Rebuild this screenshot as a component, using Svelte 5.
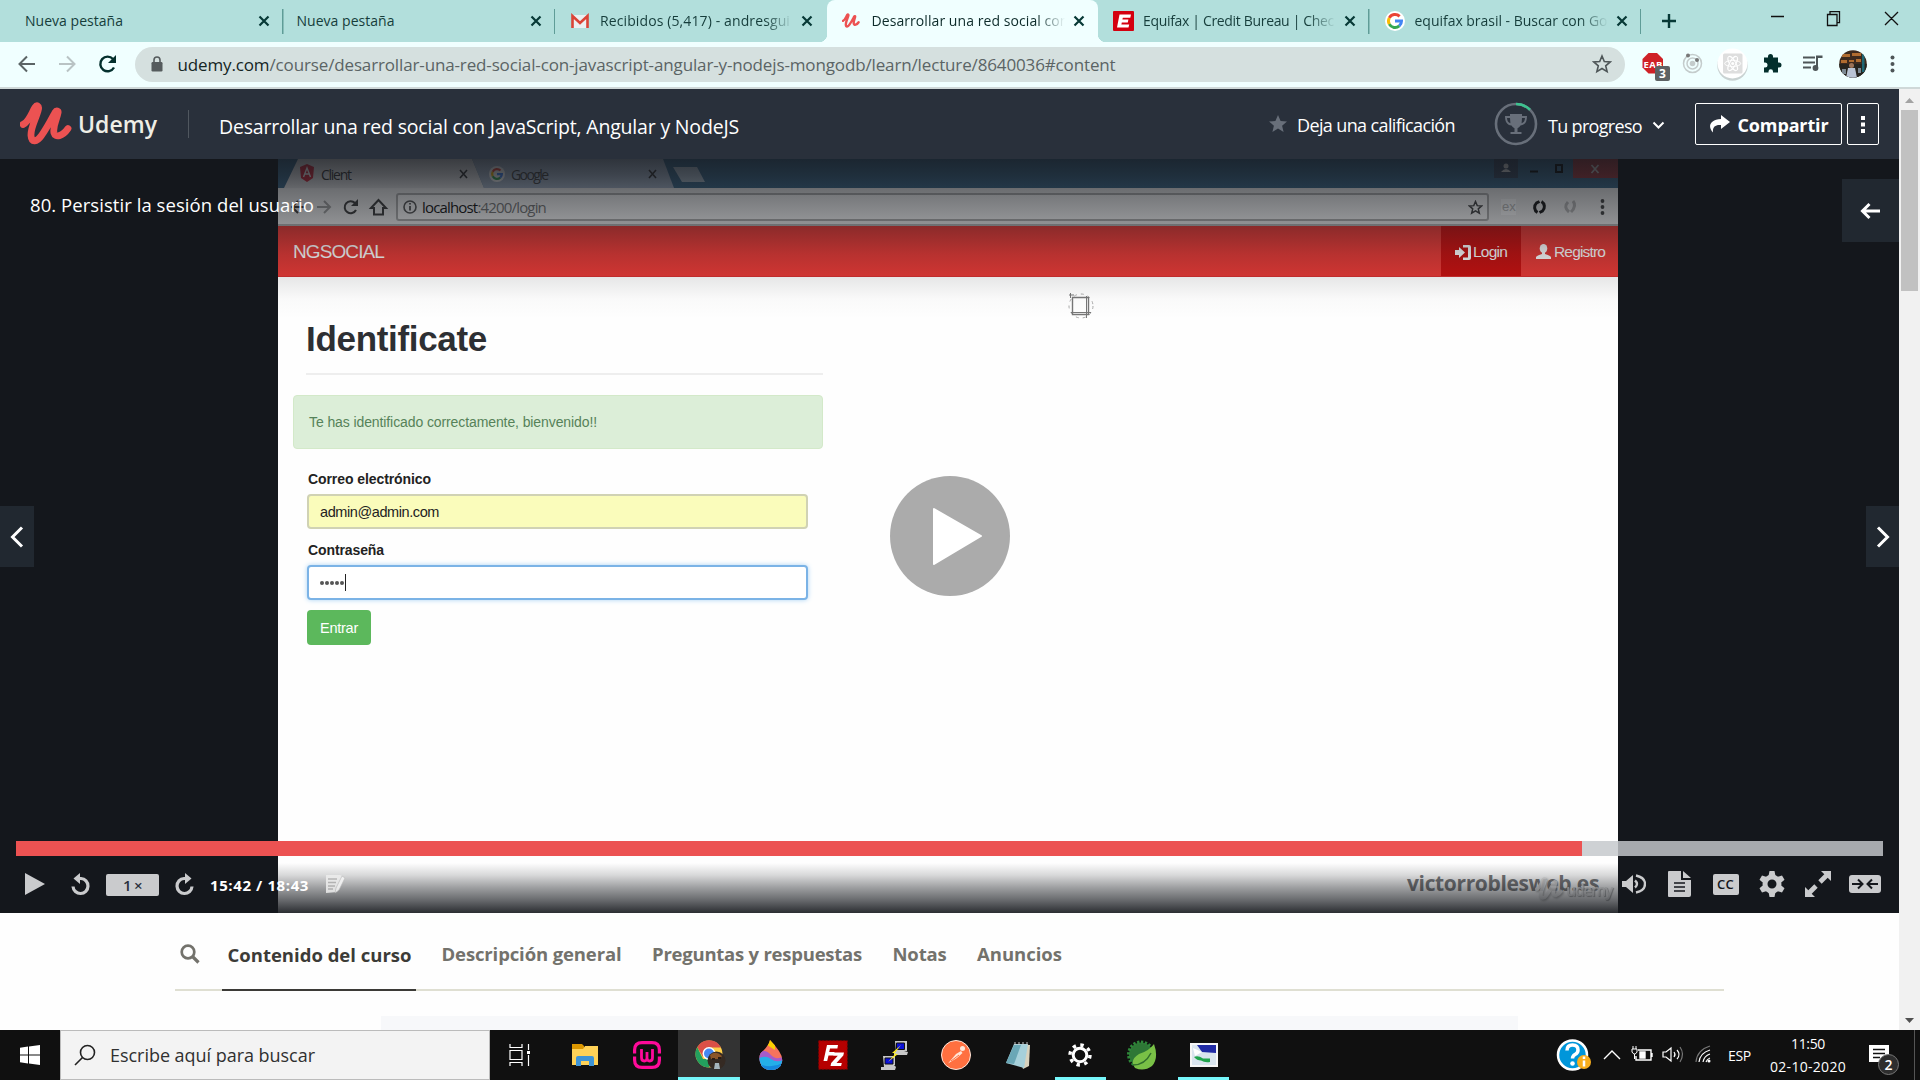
<script>
  const browserTabs = [
    { title: 'Nueva pestaña', width: 98 },
    { title: 'Nueva pestaña', width: 98 },
    { title: 'Recibidos (5,417) - andresgui', width: 190, icon: 'gmail' },
    { title: 'Desarrollar una red social con', width: 197, icon: 'udemy', active: true },
    { title: 'Equifax | Credit Bureau | Chec', width: 191, icon: 'equifax' },
    { title: 'equifax brasil - Buscar con Go', width: 193, icon: 'google' }
  ];

  const sections = [
    { title: 'Contenido del curso', width: 184, active: true },
    { title: 'Descripción general', width: 180 },
    { title: 'Preguntas y respuestas', width: 210 },
    { title: 'Notas', width: 54 },
    { title: 'Anuncios', width: 85 }
  ];

  const progress = 83.88;

  // Spreads a label's letters so that it takes the given width.
  function fit(node, width) {
    const natural = node.getBoundingClientRect().width;
    node.style.letterSpacing = (width - natural) / node.textContent.length + 'px';
    node.style.width = width + 'px';
  }
</script>

{#snippet udemyMark(color)}
  <path d="M3 22.500C9 20 12 10 15 5.500c2-3 4-1.500 3.500 1.500C17 15 10.500 25 11 33.500c.5 7.500 6 6.500 10.500 0C27 26 31 18 35 10.500c1.500-2.500 3.500-1.500 3 .5C37 17 32.500 24 34 31c1.200 5 8.500 3.500 14-4.500" fill="none" stroke={color} stroke-width="6.800" stroke-linecap="round" stroke-linejoin="round" />
{/snippet}

{#snippet googleMark()}
  <g fill="none" stroke-width="3">
    <path d="M14.6 5.4A6.5 6.5 0 0 0 4.3 6.9" stroke="#ea4335" />
    <path d="M4.3 6.9a6.5 6.5 0 0 0 0 6.2" stroke="#fbbc05" />
    <path d="M4.3 13.1a6.5 6.5 0 0 0 10 1.8" stroke="#34a853" />
    <path d="M14.3 14.9a6.5 6.5 0 0 0 2.2-4.9H10" stroke="#4285f4" />
  </g>
{/snippet}

{#snippet cross()}
  <svg class="cross" width="12" height="12" viewBox="0 0 12 12"><path d="M1.5 1.5l9 9m0-9l-9 9" /></svg>
{/snippet}

<div class="screen">
  <div class="tabstrip">
    {#each browserTabs as tab}
      <div class="tab" class:active={tab.active}>
        {#if tab.icon}
          <span class="favicon">
            {#if tab.icon === 'gmail'}
              <svg width="20" height="20" viewBox="0 0 20 20"><path d="M2 4h16v13H2z" fill="#eceff1" /><path d="M2.500 17V5l7.500 7 7.500-7v12" fill="none" stroke="#db4437" stroke-width="2.600" /></svg>
            {:else if tab.icon === 'udemy'}
              <svg width="18" height="18" viewBox="0 0 52 46">{@render udemyMark('#ec5252')}</svg>
            {:else if tab.icon === 'equifax'}
              <svg width="21" height="20" viewBox="0 0 21 20"><rect width="21" height="20" rx="1" fill="#d4000f" /><path d="M6.5 3.5H18l-.7 3.2H9.8l-.4 1.8h6l-.6 3h-6l-.4 2h7.8l-.7 3H4z" fill="#fff" /></svg>
            {:else}
              <svg width="20" height="20" viewBox="0 0 20 20"><circle cx="10" cy="10" r="10" fill="#fff" />{@render googleMark()}</svg>
            {/if}
          </span>
        {/if}
        <span class="title" class:faded={tab.icon}><span class="fit" use:fit={tab.width}>{tab.title}</span></span>
        {@render cross()}
      </div>
    {/each}
    <svg class="newtab" width="16" height="16" viewBox="0 0 16 16"><path d="M8 1v14M1 8h14" fill="none" stroke="#073936" stroke-width="2.4" /></svg>
    <svg class="winbtns" width="130" height="20" viewBox="0 0 130 20" fill="none" stroke="#111" stroke-width="1.3"><path d="M1 8.500h13M57.500 6.500h9.500v11h-9.500zM60 6v-2.300h9.500v11H67M115 4l13 13m0-13l-13 13" /></svg>
  </div>

  <div class="toolbar">
    <svg class="nav" width="100" height="24" viewBox="0 0 100 24" fill="none" stroke-width="2">
      <path d="M17 12H2M9 4.500L1.500 12 9 19.500" stroke="#5b6465" />
      <path d="M41 12h15M49 4.500l7.500 7.500-7.500 7.500" stroke="#b9c3c4" />
      <path d="M96 15.500A7.300 7.300 0 1 1 95 7" stroke="#04302d" stroke-width="2.400" /><path d="M98 3v8h-8z" fill="#04302d" />
    </svg>
    <div class="omnibox">
      <svg width="12" height="16" viewBox="0 0 12 16"><rect x=".5" y="6" width="11" height="9.500" rx="1.200" fill="#555b5d" /><path d="M3 7V4a3 3 0 0 1 6 0v3" fill="none" stroke="#555b5d" stroke-width="1.600" /></svg>
      <span class="fit url" use:fit={938}><b>udemy.com</b>/course/desarrollar-una-red-social-con-javascript-angular-y-nodejs-mongodb/learn/lecture/8640036#content</span>
      <svg class="star" width="20" height="20" viewBox="0 0 20 20"><path d="M10 2l2.300 5.500 5.900.4-4.500 3.900 1.400 5.800L10 14.500l-5.100 3.100 1.400-5.800L1.800 7.900l5.900-.4z" fill="none" stroke="#4e5658" stroke-width="1.600" /></svg>
    </div>
    <svg class="ext" width="260" height="36" viewBox="1640 47 260 36">
      <path d="M1648.500 54h8.500l6 6v8.500l-6 6h-8.500l-6-6V60z" fill="#cf2127" />
      <text x="1643.500" y="68.500" fill="#fff" font-size="9.500" font-weight="700" textLength="19">EAB</text>
      <rect x="1655" y="67" width="15" height="15" rx="2" fill="#5d6264" /><text x="1659" y="79" fill="#fff" font-size="12" font-weight="700">3</text>
      <g fill="none" stroke="#c4cccc" stroke-width="1.500"><circle cx="1692.500" cy="64.500" r="9" /><circle cx="1692.500" cy="64.500" r="5.500" /></g><circle cx="1692.500" cy="64.500" r="2.800" fill="#c4cccc" /><circle cx="1688" cy="56.500" r="2" fill="#777" /><circle cx="1697" cy="61" r="2" fill="#777" />
      <circle cx="1732.500" cy="66.500" r="15.200" fill="#c9d2d2" /><circle cx="1732.500" cy="64.500" r="15" fill="#fff" /><rect x="1723" y="54.500" width="19.500" height="20" rx="1.500" fill="#dedede" />
      <g fill="none" stroke="#fff"><ellipse cx="1732.700" cy="64.500" rx="8" ry="3" /><ellipse cx="1732.700" cy="64.500" rx="8" ry="3" transform="rotate(60 1732.700 64.500)" /><ellipse cx="1732.700" cy="64.500" rx="8" ry="3" transform="rotate(120 1732.700 64.500)" /></g><circle cx="1732.700" cy="64.500" r="1.500" fill="#fff" />
      <path d="M1764 58.500h4v-1a2.500 2.500 0 0 1 5 0v1h5v5h1a2.500 2.500 0 0 1 0 5h-1v5h-5v-1a2 2 0 0 0-4.500 0v1h-4.500v-5h1a2.400 2.400 0 0 0 0-5h-1z" fill="#032f2c" />
      <path d="M1803 58.500h12M1803 63.500h12M1803 68.500h8" stroke="#4e5658" stroke-width="2" /><path d="M1817 58v11" stroke="#4e5658" stroke-width="2" /><path d="M1816 56.500h6.500v2.500h-6.500z" fill="#4e5658" /><circle cx="1815.500" cy="69" r="2.900" fill="#4e5658" />
      <g clip-path="url(#avatar)"><rect x="1839" y="50" width="29" height="29" fill="#3d2a1e" /><path d="M1842 55h8v3h-8zM1852 54h9v3h-9zM1841 61h6v3h-6zM1849 61h5v2h-5zM1856 60h5v3h-5z" fill="#b06c30" /><path d="M1839 65h29v14h-29z" fill="#26241f" /><path d="M1848 69h7l2 10h-11z" fill="#b9c3d4" /><circle cx="1851.500" cy="66.500" r="2.500" fill="#9b7257" /><path d="M1842 70h4v5h-4zM1858 69h3v5h-3z" fill="#7b8791" /><path d="M1862 53h2.500v20h-2.500z" fill="#1e6673" /></g>
      <clipPath id="avatar"><circle cx="1853" cy="65" r="13.800" /></clipPath>
      <g fill="#4e5658"><circle cx="1892.500" cy="58.500" r="2" /><circle cx="1892.500" cy="65" r="2" /><circle cx="1892.500" cy="71.500" r="2" /></g>
    </svg>
  </div>

  <div class="page">
    <main>
      <header>
        <svg class="logo" width="52" height="44" viewBox="0 0 52 44" preserveAspectRatio="none">{@render udemyMark('#ec5252')}</svg>
        <span class="fit brand" use:fit={79}>Udemy</span>
        <i class="rule"></i>
        <h1 class="fit" use:fit={520}>Desarrollar una red social con JavaScript, Angular y NodeJS</h1>
        <svg class="rate-star" width="18" height="18" viewBox="0 0 18 18"><path d="M9 0l2.600 6 6.400.5-4.900 4.200 1.500 6.300L9 13.600 3.400 17l1.500-6.300L0 6.500 6.400 6z" fill="#686f7a" /></svg>
        <span class="fit rate" use:fit={158}>Deja una calificación</span>
        <svg class="trophy" width="44" height="46" viewBox="0 0 44 46"><circle cx="22" cy="23" r="20" fill="none" stroke="#686f7a" stroke-width="2.600" /><path d="M22 3a20 20 0 0 1 14 5.700" fill="none" stroke="#3dc28f" stroke-width="2.600" /><path d="M16 13h12v2h5c0 6-2 9-6.500 9.500-1 1.500-2 2.300-3 2.700V31h4v2h-11v-2h4v-3.800c-1-.4-2-1.200-3-2.700C13 24 11 21 11 15h5zm-3 4c.2 2.800 1.200 4.500 3.400 5.300L16 17zm15 0l-.4 5.300c2.200-.8 3.200-2.500 3.400-5.300z" fill="#686f7a" /></svg>
        <span class="fit prog" use:fit={94}>Tu progreso</span>
        <svg class="chev" width="13" height="9" viewBox="0 0 13 9"><path d="M1.500 1.500l5 5 5-5" fill="none" stroke="#fff" stroke-width="2" /></svg>
        <button class="share">
          <svg width="21" height="18" viewBox="0 0 21 18"><path d="M12 0l9 7-9 7v-4C6 9.500 3.500 12 4 17.500-1.500 12 .500 4.500 12 4z" fill="#fff" /></svg>
          <span class="fit" use:fit={91}>Compartir</span>
        </button>
        <button class="more"><svg width="4" height="17" viewBox="0 0 4 17" fill="#fff"><path d="M0 0h4v4H0zM0 6.500h4v4H0zM0 13h4v4H0z" /></svg></button>
      </header>

      <div class="player">
        <div class="video">
          <svg class="vtabs" width="1340" height="29" viewBox="278 159 1340 29">
            <path d="M278 159h1340v29H278z" fill="#3c6b8e" />
            <path d="M472 159h191l11 29H484z" fill="#a9b8cc" /><path d="M673 167h24l8 15h-23z" fill="#b1c2d2" />
            <path d="M278 188h6l14-29h174l12 29z" fill="#e4e4e6" />
            <path d="M300 167l7-3 7 3-1 11-6 4-6-4z" fill="#d9263a" /><path d="M303.500 177l3.500-9 3.500 9m-6-3h5" fill="none" stroke="#fff" stroke-width="1.400" />
            <text x="321" y="180" font-size="14" textLength="31" fill="#333">Client</text><text x="511" y="180" font-size="14" textLength="38" fill="#444">Google</text>
            <circle cx="497" cy="174" r="8" fill="#f7f7f7" /><g transform="translate(489.500 166.500) scale(.75)">{@render googleMark()}</g>
            <path d="M460 170l7 8m0-8l-7 8M649 170l7 8m0-8l-7 8" stroke="#333" stroke-width="1.600" />
            <path d="M1494 159h24v19h-24z" fill="#3b4b63" /><circle cx="1506" cy="166" r="2.500" fill="#ddd" /><path d="M1501 172q5-6 10 0z" fill="#ddd" />
            <path d="M1530 171.500h8M1556 165h6v7h-6z" fill="none" stroke="#0a0a0a" stroke-width="2" /><path d="M1573 159h45v19h-45z" fill="#a8393f" /><path d="M1591.500 165l7 8m0-8l-7 8" stroke="#ccc" stroke-width="1.700" />
          </svg>
          <div class="vbar">
            <svg width="110" height="26" viewBox="280 194 110 26" fill="none" stroke="#3c3c3c" stroke-width="2">
              <path d="M304 207h-13m6-6l-6 6 6 6" /><path d="M316 207h13m-6-6l6 6-6 6" stroke="#a0a0a0" /><path d="M355 210a6 6 0 1 1-1-7" /><path d="M357 199v7h-7z" fill="#3c3c3c" stroke="none" /><path d="M370 208l7.500-8 7.500 8h-3v6.500h-9V208z" />
            </svg>
            <div class="vurl">
              <svg width="14" height="14" viewBox="0 0 14 14"><circle cx="7" cy="7" r="6" fill="none" stroke="#555" stroke-width="1.600" /><path d="M7 6v4.500M7 3v1.600" stroke="#555" stroke-width="1.800" /></svg>
              <span class="fit" use:fit={124}><b>localhost</b>:4200/login</span>
              <svg class="vstar" width="15" height="15" viewBox="0 0 20 20"><path d="M10 2l2.300 5.500 5.900.4-4.500 3.900 1.400 5.800L10 14.500l-5.100 3.100 1.400-5.800L1.800 7.900l5.900-.4z" fill="none" stroke="#444" stroke-width="2" /></svg>
            </div>
            <svg width="115" height="24" viewBox="1498 195 115 24"><path d="M1501 199h15v16h-15z" fill="#fff" /><text x="1502" y="211" font-size="13" fill="#bbb">ex</text><g fill="none" stroke-width="3"><path d="M1537.500 212.500a6 6 0 0 1-1-9.500l3-1.500M1541.500 201.500a6 6 0 0 1 1 9.500l-3 1.500" stroke="#171717" /><path d="M1569 212q-6-5-1-10M1573 201q4 5-2 11" stroke="#b8b8b8" /></g><g fill="#444"><circle cx="1602.500" cy="201" r="1.900" /><circle cx="1602.500" cy="207" r="1.900" /><circle cx="1602.500" cy="213" r="1.900" /></g></svg>
          </div>
          <div class="vnav">
            <span class="fit vbrand" use:fit={91}>NGSOCIAL</span>
            <span class="vlogin">
              <svg width="16" height="15" viewBox="0 0 16 15" fill="#fff"><path d="M0 5h4V2l6 5.500L4 13v-3H0z" /><path d="M8 0h6q2 0 2 2v11q0 2-2 2H8v-2.500h5v-10H8z" /></svg>
              <span class="fit" use:fit={34}>Login</span>
            </span>
            <span class="vreg">
              <svg width="15" height="16" viewBox="0 0 15 16" fill="#fff"><ellipse cx="7.500" cy="4.500" rx="3.800" ry="4.500" /><path d="M6 7h3v3q5 1.500 6 3v2H0v-2q1-1.500 6-3z" /></svg>
              <span class="fit" use:fit={51}>Registro</span>
            </span>
          </div>
          <div class="vform">
            <h2><span class="fit" use:fit={181}>Identificate</span></h2>
            <div class="alert"><span class="fit" use:fit={288}>Te has identificado correctamente, bienvenido!!</span></div>
            <label><span class="fit" use:fit={123}>Correo electrónico</span></label>
            <div class="field mail"><span class="fit" use:fit={119}>admin@admin.com</span></div>
            <label><span class="fit" use:fit={76}>Contraseña</span></label>
            <div class="field pass"><i></i><i></i><i></i><i></i><i></i><b></b></div>
            <div class="enter"><span class="fit" use:fit={38}>Entrar</span></div>
          </div>
          <span class="credit"><span class="fit" use:fit={192}>victorroblesweb.es</span></span>
          <span class="watermark"><svg width="28" height="25" viewBox="0 0 52 46">{@render udemyMark('#e6e6e6')}</svg><span class="fit" use:fit={46}>udemy</span></span>
          <svg class="cursor" width="28" height="28" viewBox="0 0 28 28" fill="none" stroke="#777"><circle cx="14" cy="14" r="12" stroke-dasharray="3 4" stroke="#aaa" /><path d="M5.500 5.500h16v17h-16z" stroke-width="1.400" /><path d="M19.500 4v22M4 20.500h20M2 3h5M3.500 1v5" /></svg>
        </div>

        <div class="shade top"></div>
        <div class="shade bottom"></div>
        <span class="lecture"><span class="fit" use:fit={284}>80. Persistir la sesión del usuario</span></span>
        <button class="side back"><svg width="21" height="18" viewBox="0 0 21 18"><path d="M20 9H3M9.500 2L2.500 9l7 7" /></svg></button>
        <button class="side prev"><svg width="14" height="22" viewBox="0 0 14 22"><path d="M12 1.500L2.500 11l9.500 9.500" /></svg></button>
        <button class="side next"><svg width="14" height="22" viewBox="0 0 14 22"><path d="M2 1.500l9.500 9.500L2 20.500" /></svg></button>
        <svg class="bigplay" width="120" height="120" viewBox="0 0 120 120"><circle cx="60" cy="60" r="60" fill="#ababab" /><path d="M44 33l47 27-47 28z" fill="#fff" stroke="#fff" stroke-width="2" stroke-linejoin="round" /></svg>

        <div class="controls">
          <div class="track"><div class="played" style="width: {progress}%"></div></div>
          <div class="buttons">
            <svg class="c-play" width="20" height="22" viewBox="0 0 20 22"><path d="M0 0l20 11L0 22z" /></svg>
            <svg class="c-rew" width="20" height="23" viewBox="0 0 20 23"><path d="M8 5.500h2a7.500 7.500 0 1 1-8 8" fill="none" stroke="#cacbcd" stroke-width="3.200" /><path d="M9 0v11L2.500 5.500z" /></svg>
            <span class="speed"><span class="fit" use:fit={19}>1 ×</span></span>
            <svg class="c-fwd" width="20" height="23" viewBox="0 0 20 23"><path d="M12 5.500h-2a7.500 7.500 0 1 0 8 8" fill="none" stroke="#cacbcd" stroke-width="3.200" /><path d="M11 0v11l6.500-5.500z" /></svg>
            <span class="fit time" use:fit={99}>15:42 / 18:43</span>
            <svg class="c-note" width="22" height="20" viewBox="0 0 22 20"><path d="M1 1h14l2 1-5 16-11 1z" fill="#eee" /><path d="M3 5h9M3 8.500h8M3 12h7M3 15h5" stroke="#b2b2b2" stroke-width="1.300" /><path d="M17 2l3 2-6 12-4 3 1-5z" fill="#f8f8f8" stroke="#b5b5b5" stroke-width=".6" /></svg>
            <svg class="c-vol" width="24" height="20" viewBox="0 0 24 20"><path d="M0 7h4l7-6v18l-7-6H0z" /><path d="M13 6.500q4 3.500 0 7M14 1.500q9 2 9 8.500t-9 8.500" fill="none" stroke="#cacbcd" stroke-width="2.400" /></svg>
            <svg class="c-doc" width="23" height="26" viewBox="0 0 23 26"><path d="M1 0h12v9h10v15q0 2-2 2H1q-1 0-1-1V1q0-1 1-1zM15 0l8 7h-8z" /><path d="M6 12h11M6 16h11M6 20h11" stroke="#14171c" stroke-width="1.600" /></svg>
            <span class="cc"><span class="fit" use:fit={17}>CC</span></span>
            <svg class="c-gear" width="26" height="26" viewBox="0 0 26 26"><circle cx="13" cy="13" r="7" fill="none" stroke="#cacbcd" stroke-width="5" /><path d="M10.500 0h5l1 5h-7zM10.500 26h5l1-5h-7zM.5 8.700L3 4.400l4.800 1.700-3.500 6zM25.500 17.300L23 21.600l-4.800-1.700 3.500-6zM25.500 8.700L23 4.400l-4.800 1.700 3.500 6zM.5 17.300L3 21.600l4.800-1.700-3.500-6z" /></svg>
            <svg class="c-full" width="26" height="26" viewBox="0 0 26 26"><path d="M16 0h10v10l-3.300-3.300-6 6-3.400-3.400 6-6zM10 26H0V16l3.300 3.300 6-6 3.400 3.400-6 6z" /></svg>
            <svg class="c-wide" width="32" height="18" viewBox="0 0 32 18"><rect width="32" height="18" rx="3" /><path d="M3 9h10M9 4.500L13.500 9 9 13.500M29 9H19M23 4.500L18.500 9l4.500 4.500" fill="none" stroke="#14171c" stroke-width="2" /></svg>
          </div>
        </div>
      </div>

      <nav class="sections">
        <svg width="20" height="20" viewBox="0 0 20 20"><circle cx="8" cy="8" r="6.300" fill="none" stroke="#73726c" stroke-width="2.700" /><path d="M12.500 12.500l6 6" stroke="#73726c" stroke-width="3.200" /></svg>
        {#each sections as s}
          <span class="section" class:active={s.active}><span class="fit" use:fit={s.width}>{s.title}</span></span>
        {/each}
      </nav>
      <div class="panel"></div>
    </main>
    <div class="scrollbar">
      <svg width="21" height="21" viewBox="0 0 21 21"><path d="M6 14l4.500-5 4.500 5z" fill="#a3a3a3" /></svg>
      <div class="thumb"></div>
      <svg class="down" width="21" height="21" viewBox="0 0 21 21"><path d="M6 9l4.500 5L15 9z" fill="#505050" /></svg>
    </div>
  </div>

  <footer>
    <div class="start"><svg width="20" height="20" viewBox="0 0 20 20"><path d="M0 2.700l8-1.100v7.900H0zM9 1.400L20 0v9.500H9zM0 10.500h8v7.900l-8-1.100zM9 10.500h11V20L9 18.600z" fill="#fff" /></svg></div>
    <div class="search">
      <svg width="22" height="22" viewBox="0 0 22 22"><circle cx="13.500" cy="8.500" r="7" fill="none" stroke="#222" stroke-width="1.600" /><path d="M8.500 13.500L1 21" stroke="#222" stroke-width="1.600" /></svg>
      <span class="fit" use:fit={205}>Escribe aquí para buscar</span>
    </div>
    <div class="app task"><svg width="22" height="22" viewBox="0 0 22 22" fill="none" stroke="#fff" stroke-width="1.200"><path d="M1 0v3.500h12V0M1 22v-3.500h12V22M1 6.500h12v9H1zM19.500 0v6M19.500 11v11" /><path d="M18 7h3v3h-3z" fill="#fff" stroke="none" /></svg></div>
    <div class="app"><svg width="28" height="28" viewBox="0 0 28 28"><path d="M1 3h10l2 2v4H1z" fill="#dc9700" /><path d="M1 8h11l2-3h13v19H1z" fill="#ffd257" /><path d="M5 25v-8q0-2 2-2h14q2 0 2 2v8h-5v-5h-8v5z" fill="#3e94d6" /></svg></div>
    <div class="app"><svg width="30" height="30" viewBox="0 0 30 30" fill="none" stroke="#ff0a9a" stroke-width="3.200"><path d="M2.600 13.500V10q0-7.400 7.400-7.400h10q7.400 0 7.400 7.400v3.500M2.600 16.500V20q0 7.400 7.400 7.400h10q7.400 0 7.400-7.400v-3.500" /><path d="M9.500 9v8.500q0 3.500 2.800 3.500 2.700 0 2.700-3V12v6q0 3 2.700 3 2.800 0 2.800-3.500V9" stroke-width="2.800" /></svg></div>
    <div class="app current"><svg width="32" height="32" viewBox="0 0 32 32"><circle cx="15" cy="15" r="13.500" fill="#ffcf48" /><path d="M3.300 8.200A13.500 13.500 0 0 1 27 8.500H15L9 18z" fill="#dc5047" /><path d="M3.300 8.200A13.500 13.500 0 0 0 15 28.500L19 20H9z" fill="#23a05e" /><circle cx="15" cy="14.500" r="6.500" fill="#fff" /><circle cx="15" cy="14.500" r="5" fill="#4688f1" /><circle cx="22.500" cy="21.500" r="9" fill="#352a23" /><path d="M16 16q6-5 12 1l-2 3h-9z" fill="#8b5528" /><path d="M18 19h3v2h-3zM24 18h3v2h-3z" fill="#2a1c14" /><path d="M21 24h4l1 6h-6z" fill="#a5b5bd" /></svg></div>
    <div class="app"><svg width="24" height="30" viewBox="0 0 24 30"><clipPath id="drop"><path d="M11 0Q16 5 20 11t3 11q-2 8-11 8T1 22 4 11q6-6 7-11z" /></clipPath><g clip-path="url(#drop)"><path d="M0 0h24v30H0z" fill="#f6735d" /><path d="M8 0h8v10L8 5z" fill="#fcd000" /><path d="M0 11q8-1 12 4t12 2v13H0z" fill="#a65bc9" /><path d="M0 18q7-3 12 1t12 1v10H0z" fill="#24afe9" /><path d="M0 24q12 5 24-1v7H0z" fill="#1689dd" /></g></svg></div>
    <div class="app"><svg width="30" height="30" viewBox="0 0 30 30"><rect x=".7" y=".7" width="28.600" height="28.600" fill="#b60000" stroke="#7c0000" stroke-dasharray="2 1.500" /><path d="M5.500 21L9 5h11l-.6 3.500H12l-.8 3.500h5.300l-.7 3.400h-5.300L9.200 21zM16 12.500h10l-.7 3-6.800 7.500h5.300l-.7 3H12.500l.7-3 6.600-7.300h-4.500z" fill="#fff" /></svg></div>
    <div class="app"><svg width="30" height="30" viewBox="0 0 30 30"><path d="M16 1h12v10h-3l4 1-1 3H15v-3h2zM4 16h12v9h-1l2 2-1 3H2v-3h3z" fill="#c8c8c8" /><path d="M17.500 3h8v6.500h-8zM6 18h8v6H6z" fill="#0b11d8" stroke="#111" /><path d="M22 5l-9 8h4L9 22l10-8h-4z" fill="#ffee20" /></svg></div>
    <div class="app postman"><svg width="30" height="30" viewBox="0 0 30 30"><circle cx="15" cy="15" r="14.500" fill="#ff7040" stroke="#ffe8dc" /><path d="M7 23.500l8-9.500 5-3 1.500 2-5.500 5z" fill="#ffe6d8" /><circle cx="21.500" cy="8.500" r="2.500" fill="#ffe6d8" /><path d="M10 21l8-6" stroke="#ff7040" /></svg></div>
    <div class="app"><svg width="28" height="28" viewBox="0 0 28 28"><path d="M11 3l15 1-1 21-6 3z" fill="#d8d2bd" /><path d="M10 3l14 0-4 24L2 22z" fill="#a6d0da" /><path d="M10 4h7l-7 19-8-1z" fill="#6aa7b6" /><path d="M11 4V1m4 3V1m4 3V1m4 3V1" stroke="#ccc" /></svg></div>
    <div class="app open"><svg width="24" height="24" viewBox="0 0 24 24"><circle cx="12" cy="12" r="6.800" fill="none" stroke="#fff" stroke-width="3" /><circle cx="12" cy="12" r="10" fill="none" stroke="#fff" stroke-width="3.400" stroke-dasharray="3.400 4.454" /></svg></div>
    <div class="app"><svg width="30" height="30" viewBox="0 0 30 30"><circle cx="14" cy="14.500" r="12" fill="#2e7736" /><circle cx="14" cy="14.500" r="12.500" fill="none" stroke="#2e8739" stroke-width="3" stroke-dasharray="2.300 1.600" /><path d="M27 4q5 14-2 22-8 6-17 2-6-8 4-14 10-3 15-10z" fill="#79c046" /><path d="M6 25q12 0 18-12" fill="none" stroke="#316f2c" stroke-width="1.500" /></svg></div>
    <div class="app open"><svg width="28" height="24" viewBox="0 0 28 24"><path d="M1 1h26v22H1z" fill="#d9e4ee" stroke="#f6f6f6" stroke-width="2" /><path d="M7 2h19v8L12 9z" fill="#202aa5" /><path d="M3 5l9 4-7 4z" fill="#fff" /><path d="M4 14q4-2 9 1.500h7v3.500q-5 1-9-1.500-4 0-7-3.500z" fill="#21a44d" /></svg></div>
    <div class="tray">
      <svg class="help" width="36" height="34" viewBox="0 0 36 34"><circle cx="16.500" cy="17" r="14.500" fill="#0096da" stroke="#fff" stroke-width="2.500" /><path d="M11 12.500q0-5.500 5.500-5.500t5.500 5q0 3-3 4.500-2.500 1.500-2.500 4" fill="none" stroke="#fff" stroke-width="3.500" /><circle cx="16.500" cy="25.500" r="2.300" fill="#fff" /><circle cx="28" cy="24" r="7" fill="#f9ae1c" /><path d="M28 22.500v6M28 18.500v2.500" stroke="#fff" stroke-width="2.500" /></svg>
      <svg class="status" width="110" height="26" viewBox="1602 1043 110 26" fill="none" stroke="#fff" stroke-width="1.400"><path d="M1604 1060l8-8 8 8M1638 1051h13v10h-15v-4M1652 1054v4" /><path d="M1640 1053h5v6h-5z" fill="#fff" /><path d="M1632 1050h5v3q-1 2-2.500 2t-2.500-2zM1633 1050v-3M1636 1050v-3M1634.500 1055v5" stroke-width="1" /><path d="M1663 1053h3l5-4v13l-5-4h-3zM1674 1053q2 2.500 0 5M1677 1051q4 4.500 0 9" stroke-width="1.200" /><path d="M1680 1048q5 7 0 15" stroke="#777" stroke-width="1.200" /><path d="M1696 1063q1-12 14-16" stroke="#777" stroke-width="1.200" /><path d="M1699 1063q1-9 11-12M1703 1063q1-6 7-8M1706 1063q1-3 4-4" stroke-width="1.200" /><circle cx="1709" cy="1062" r="1.500" fill="#fff" stroke="none" /></svg>
      <span class="fit lang" use:fit={23}>ESP</span>
      <div class="clock"><span class="fit" use:fit={34}>11:50</span><span class="fit" use:fit={76}>02-10-2020</span></div>
      <svg class="notes" width="50" height="50" viewBox="1866 1030 50 50"><path d="M1869 1045h20v17h-5l-5 5v-5h-10z" fill="#fff" /><path d="M1873 1049.500h12M1873 1053.500h12M1873 1057.500h7" stroke="#111" stroke-width="1.300" /><circle cx="1888.500" cy="1064.500" r="10" fill="#2e2e2e" stroke="#777" /><text x="1884.500" y="1069.500" fill="#fff" font-size="14" font-weight="600">2</text><path d="M1914.500 1030v50" stroke="#555" /></svg>
    </div>
  </footer>
</div>

<style>
  :global(body) { margin: 0; overflow: hidden; background: #fff; }
  .screen { width: 1920px; height: 1080px; display: flex; flex-direction: column; font-family: "Open Sans", "Noto Sans", sans-serif; font-size: 15px; }
  .screen * { box-sizing: border-box; }
  svg { display: block; flex: none; }
  .fit { display: inline-block; flex: none; white-space: nowrap; }
  b { font-weight: inherit; }
  h1, h2 { margin: 0; font-weight: 400; }
  button { padding: 0; border: 0; background: none; color: inherit; font: inherit; display: flex; align-items: center; justify-content: center; }

  .tabstrip { height: 42px; flex: none; display: flex; background: #b2dfdc; padding-left: 12px; }
  .tab { width: 271.500px; display: flex; align-items: center; padding-left: 13px; background: linear-gradient(#5f9c97, #5f9c97) right 0 top 9px / 1.500px 25px no-repeat; color: #163d3b; font-size: 14px; }
  .tab.active { position: relative; background: #f0ffff; border-radius: 8px 8px 0 0; color: #0d2b2a; }
  .tab:has(+ .active) { background: none; }
  .tab.active::before, .tab.active::after { content: ""; position: absolute; bottom: 0; width: 8px; height: 8px; }
  .tab.active::before { left: -8px; background: radial-gradient(circle at 0 0, transparent 8px, #f0ffff 8.500px); }
  .tab.active::after { right: -8px; background: radial-gradient(circle at 100% 0, transparent 8px, #f0ffff 8.500px); }
  .favicon { width: 20px; margin-left: 2px; margin-right: 10px; }
  .title { flex: 1; overflow: hidden; padding-bottom: 2px; }
  .title.faded { mask-image: linear-gradient(90deg, #000 165px, transparent 193px); }
  .cross { margin: 0 13.500px 0 3px; fill: none; stroke: #073936; stroke-width: 2.200; }
  .newtab { margin: 13px 0 0 20px; }
  .winbtns { margin: 8px 0 0 93px; }

  .toolbar { height: 47px; flex: none; display: flex; align-items: center; background: #f0ffff; border-bottom: 2px solid #cfd8d8; padding-bottom: 1px; }
  .nav { margin-left: 18px; margin-right: 17px; }
  .omnibox { width: 1490px; height: 35px; border-radius: 18px; background: #d5e0df; display: flex; align-items: center; padding: 0 13px 0 16px; }
  .url { margin-left: 14.500px; font-size: 17px; color: #5b6465; }
  .url b { color: #142524; }
  .star { margin-left: auto; }
  .ext { margin-left: 15px; }

  .page { height: 941px; flex: none; display: flex; }
  main { width: 1899px; height: 941px; overflow: hidden; background: #fefefe; }
  header { height: 70px; display: flex; align-items: center; background: #29303b; color: #fff; padding-left: 20px; font-size: 18px; }
  .brand { margin-left: 6px; font-size: 23px; font-weight: 600; color: #eeeee6; }
  .rule { width: 1px; height: 28px; margin: 0 30px 0 31px; background: #50575f; }
  h1 { font-size: 19.500px; padding-top: 5px; }
  .rate-star { margin-left: 530px; }
  .rate { margin-left: 10px; padding-top: 1px; }
  .trophy { margin-left: 39px; }
  .prog { margin-left: 10px; padding-top: 3px; }
  .chev { margin-left: 10px; margin-top: 2px; }
  .share { width: 147px; height: 42px; margin-left: 30px; border: 1.500px solid #fff; border-radius: 2px; font-weight: 700; gap: 8px; }
  .share .fit { padding-top: 2px; }
  .more { width: 32px; height: 42px; margin-left: 5px; border: 1.500px solid #fff; border-radius: 2px; }

  .player { position: relative; height: 754px; background: #14171c; }
  .video { position: relative; margin-left: 278px; width: 1340px; height: 754px; background: #fefefe; font-family: "Liberation Sans", Arial, sans-serif; overflow: hidden; }
  .vtabs { font-family: "Open Sans", sans-serif; }
  .vbar { height: 38px; display: flex; align-items: center; background: #f2f2f2; border-bottom: 2px solid #b5b5b5; padding: 2px 0 0 3px; }
  .vurl { width: 1093px; height: 28px; margin: 0 9px 0 5px; border: 2px solid #b0b0b0; border-radius: 3px; background: #fcfcfc; display: flex; align-items: center; padding: 0 4px 0 5px; font: 15px "Open Sans", sans-serif; color: #777; }
  .vurl .fit { margin-left: 5px; }
  .vurl b { color: #111; }
  .vstar { margin-left: auto; }
  .vnav { height: 51px; display: flex; align-items: center; background: #e53935; border-bottom: 1px solid #d32f2f; color: #fff; padding-left: 15px; font-size: 15.500px; }
  .vbrand { font-size: 19px; padding-top: 2px; }
  .vlogin { margin-left: auto; width: 80px; height: 50px; background: #c5100f; display: flex; align-items: center; padding: 2px 0 0 14px; gap: 2px; }
  .vreg { width: 97px; display: flex; align-items: center; padding: 2px 0 0 15px; gap: 3px; }
  .vform { width: 545px; padding: 34px 15px 0 30px; font-size: 14px; color: #222; }
  h2 { height: 64px; line-height: 55px; margin: 0 -15px 0 -2px; border-bottom: 2px solid #eee; font-size: 35px; font-weight: 700; color: #2d2f33; }
  .alert { height: 54px; margin: 20px -15px 21px -15px; border: 1px solid #d3e9c9; border-radius: 4px; background: #dceed8; color: #568259; display: flex; align-items: center; padding-left: 15px; }
  label { display: flex; height: 24px; align-items: flex-start; padding-top: 1px; line-height: 16px; font-weight: 700; }
  .field { height: 35px; margin: 0 0 12px -1px; border: 2px solid #d0d2b4; border-radius: 4px; display: flex; align-items: center; padding-left: 11px; font-size: 14.500px; }
  .mail { background: #fafcbb; }
  .pass { border-color: #7bb3e6; box-shadow: 0 0 5px #a8d3f5; background: #fff; margin-bottom: 10px; }
  .pass i { width: 4px; height: 4px; margin-right: 1px; border-radius: 50%; background: #555; }
  .pass b { width: 1px; height: 17px; background: #222; }
  .enter { width: 64px; height: 35px; margin-left: -1px; border-radius: 4px; background: #5cb85c; color: #fff; display: flex; align-items: center; justify-content: center; font-size: 14.500px; }
  .credit { position: absolute; left: 1129px; top: 708px; font: 700 21px/32px "Open Sans", sans-serif; color: #77787a; }
  .watermark { position: absolute; left: 1257px; top: 718px; display: flex; align-items: center; gap: 3px; font: 600 16px/22px "Open Sans", sans-serif; color: #e6e6e6; text-shadow: 1px 1px 1px #999; opacity: .85; }
  .watermark svg { filter: drop-shadow(1px 1px 1px #999); }
  .cursor { position: absolute; left: 789px; top: 133px; }

  .shade { position: absolute; left: 0; right: 0; pointer-events: none; }
  .shade.top { top: 0; height: 160px; background: linear-gradient(rgba(20, 23, 28, .82), rgba(20, 23, 28, .72) 16px, rgba(20, 23, 28, .6) 31px, rgba(20, 23, 28, .44) 66px, rgba(20, 23, 28, .22) 95px, rgba(20, 23, 28, .1) 118px, rgba(20, 23, 28, .02) 140px, transparent); }
  .shade.bottom { bottom: 0; height: 50px; background: linear-gradient(transparent, rgba(20, 23, 28, .16) 12px, rgba(20, 23, 28, .42) 25px, rgba(20, 23, 28, .66) 38px, rgba(20, 23, 28, .9)); }
  .lecture { position: absolute; left: 30px; top: 31px; font-size: 18.500px; line-height: 30px; color: #fff; }
  .side { position: absolute; background: #212830; }
  .side path { fill: none; stroke: #fff; stroke-width: 3; }
  .back { right: 0; top: 20px; width: 57px; height: 63px; }
  .prev { left: 0; top: 347px; width: 34px; height: 61px; }
  .next { right: 0; top: 347px; width: 33px; height: 61px; }
  .bigplay { position: absolute; left: 889.500px; top: 316.500px; }

  .controls { position: absolute; left: 16px; right: 16px; bottom: 0; height: 72px; }
  .track { height: 15px; background: rgba(196, 200, 204, .834); }
  .played { height: 15px; background: #ec5252; }
  .buttons { height: 56px; display: flex; align-items: center; padding-left: 9px; fill: #cacbcd; }
  .c-rew { margin-left: 26px; }
  .speed { width: 53px; height: 22px; margin-left: 15px; margin-top: 2px; border-radius: 2px; background: #cacbcd; color: #29303b; display: flex; justify-content: center; line-height: 23px; font-size: 15px; font-weight: 600; }
  .c-fwd { margin-left: 15px; }
  .time { margin-left: 16px; margin-top: 1px; color: #fff; font-size: 15px; font-weight: 700; }
  .c-note { margin-left: 16px; opacity: .85; }
  .c-vol { margin-left: 1274.500px; }
  .c-doc { margin-left: 22px; }
  .cc { width: 26px; height: 21px; margin-left: 22px; border-radius: 2px; background: #cacbcd; color: #14171c; display: flex; justify-content: center; align-items: center; font-size: 13px; font-weight: 600; line-height: 1; }
  .c-gear { margin-left: 20.500px; }
  .c-full { margin-left: 20px; }
  .c-wide { margin-left: 18px; }

  .sections { width: 1549px; height: 78px; margin-left: 175px; border-bottom: 2px solid #dfdfd2; display: flex; align-items: center; padding-left: 5px; font-size: 18.500px; font-weight: 700; color: #73726c; }
  .section { height: 78px; margin-left: 30.500px; display: flex; align-items: center; padding-top: 5px; }
  .section.active { margin-left: 23px; margin-right: -5.500px; padding-left: 5.500px; padding-right: 4.500px; padding-top: 7px; border-bottom: 2px solid #3c3b37; color: #3c3b37; }
  .section:nth-of-type(1) { margin-top: 1px; }
  .section:nth-of-type(2) { margin-left: 31px; }
  .sections > svg { margin-top: 5px; margin-right: -1px; }
  .panel { width: 1137px; height: 14px; margin: 25px 0 0 381px; background: #f7f8fa; }

  .scrollbar { width: 21px; background: #f1f1f1; display: flex; flex-direction: column; }
  .thumb { width: 17px; height: 181px; margin: 0 2px; background: #c1c1c1; }
  .down { margin-top: auto; }

  footer { height: 50px; flex: none; display: flex; background: #101010; color: #fff; }
  .start { width: 60px; display: flex; align-items: center; justify-content: center; }
  .search { width: 430px; border: 1px solid #bbb; background: #f3f3f3; display: flex; align-items: center; padding-left: 13px; gap: 14px; font-size: 18px; color: #303030; }
  .app { width: 61.900px; display: flex; align-items: center; justify-content: center; }
  .app.task { width: 64px; padding-right: 4px; }
  .app.current { padding-left: 3px; background: #333 linear-gradient(#76f7fb, #76f7fb) bottom / 100% 3px no-repeat; }
  .app.open { background: linear-gradient(#76f7fb, #76f7fb) bottom / 51px 3px no-repeat; }
  .tray { margin-left: auto; display: flex; align-items: center; font-size: 14px; padding-right: 4px; }
  .status { margin-left: 10px; }
  .lang { margin-left: 16px; }
  .clock { width: 96px; height: 50px; margin: 0 10px 0 9px; display: flex; flex-direction: column; align-items: center; line-height: 23px; padding-top: 2px; }
</style>
